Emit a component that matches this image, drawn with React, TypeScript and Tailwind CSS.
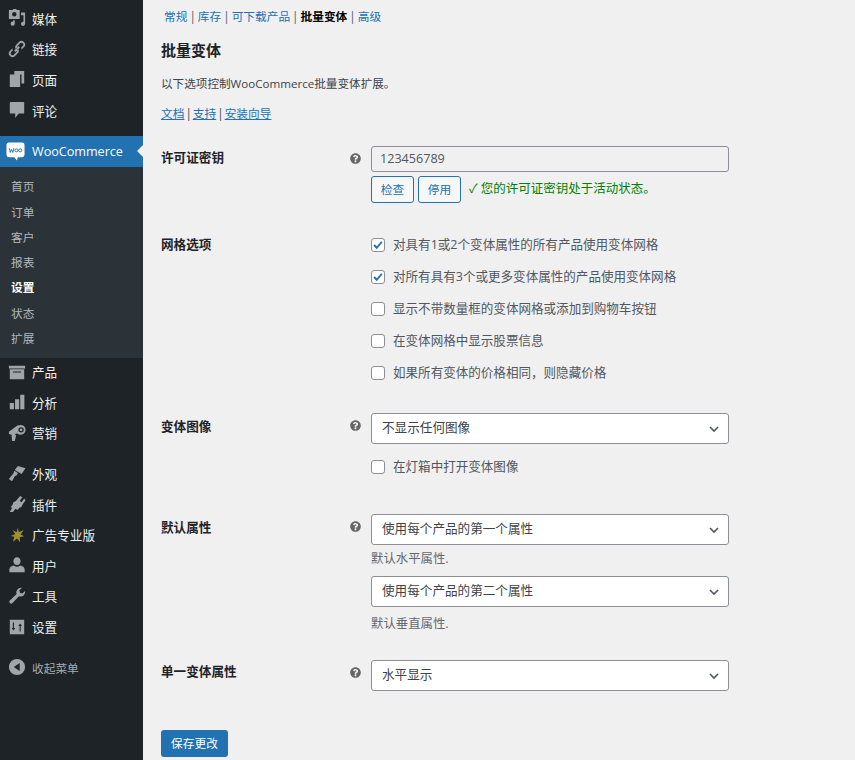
import type { ReactNode } from 'react';
import { FaQuestionCircle } from 'react-icons/fa';

const FONT = '"Open Sans", "Noto Sans CJK SC", sans-serif';

// ---------------------------------------------------------------------------
// Admin menu icons (dashicons look, drawn on a 20x20 box)
// ---------------------------------------------------------------------------

const ICONS: Record<string, ReactNode> = {
  media: (
    <path
      fillRule="evenodd"
      d="M1 1h4l1-1h3l1 1h3v10H1V1zm6 2.200a2.500 2.500 0 1 0 0 5 2.500 2.500 0 0 0 0-5zM14.500 4H19v12.500a2.300 2.300 0 1 1-1.800-2.200V7h-2.700V4zM7.500 12.500v3.800a2.300 2.300 0 1 1-1.800-2.200v-1.600h1.800z"
    />
  ),
  links: (
    <path
      fillRule="evenodd"
      d="M17.700 2.300a4 4 0 0 0-5.600 0L9.200 5.200a4 4 0 0 0-.5 5l1.600-1.600a2 2 0 0 1 .4-2l2.800-2.900a2 2 0 0 1 2.900 2.900l-1.700 1.700a6 6 0 0 1 .2 2.600l3-3a4 4 0 0 0-.2-5.600zM11.300 9.800l-1.600 1.600a2 2 0 0 1-.4 2l-2.800 2.900a2 2 0 0 1-2.900-2.900l1.700-1.700a6 6 0 0 1-.2-2.600l-3 3a4 4 0 0 0 5.800 5.600l2.900-2.900a4 4 0 0 0 .5-5zM6.800 11.800l5-5 1.400 1.400-5 5-1.400-1.400z"
    />
  ),
  pages: <path d="M7 1h11v14h-3V5H7V1zM2 5h11.500v14H2V5z" />,
  comments: <path d="M3 1h14a1 1 0 0 1 1 1v11a1 1 0 0 1-1 1h-5l-4 5v-5H3a1 1 0 0 1-1-1V2a1 1 0 0 1 1-1z" />,
  products: (
    <path
      fillRule="evenodd"
      d="M1 3h18v3H1V3zm1 4h16v11H2V7zm3.500 2.500v1h9v-1h-9z"
    />
  ),
  analytics: <path d="M2 11h4.600v7H2v-7zM7.800 7h4.600v11H7.800V7zM13.600 2h4.600v16h-4.600V2z" />,
  marketing: (
    <path
      fillRule="evenodd"
      d="M14 1a5.500 5.500 0 0 1 5.500 5.500c0 3-2.300 5.500-5.200 5.500-1.200 0-2.500-.5-4.300-1.500l-2.300.5L9 13l-1.500 6H4.500l-.5-7L1 11V8.500L8.500 3C10 1.800 12 1 14 1zm.5 2.500a3 3 0 1 0 0 6 3 3 0 0 0 0-6zm0 1.500a1.500 1.500 0 1 1 0 3 1.500 1.500 0 0 1 0-3z"
    />
  ),
  appearance: <path d="M11 1l8.500 2.500-4.500 6.500-7.500-4.500L11 1zM7 6.500l4 2.500-1 2-2.500 1.500L4.500 18 1 15.500 4.500 11 6 9.500 7 6.500z" />,
  plugins: (
    <path d="M13.500 1L16 2.500l-3 4 2 1.500 3-4 1.500 1.800-3.500 5-1 2.500-2.500 1-1.500 2L8 15.500 5.500 19H2l2.500-4.500L3 13l2-2 1-3 2.500-1L13.500 1z" />
  ),
  ads: <path d="M11 2l1 5 5.500-2.500-3.500 5 4 2-5 1 .5 5.500-3.500-4-4.500 3.500 1.500-5.500L3 11l5-2-3-4.500L9.500 7 11 2z" />,
  users: (
    <path d="M10 1.500a4 4 0 0 1 4 4.200c0 2-1.200 4.300-4 4.300S6 7.700 6 5.700a4 4 0 0 1 4-4.200zM6.500 10.500c1 1 2.200 1.500 3.500 1.500s2.500-.5 3.500-1.500c2.500.3 5 1.800 5 4.500v3H1.500v-3c0-2.700 2.500-4.200 5-4.500z" />
  ),
  tools: (
    <path d="M19 4.500a5 5 0 0 1-6.800 5.700L5 17.800a2 2 0 0 1-3-2.800l7.600-7.300A5 5 0 0 1 15.300 1L12.500 4l.8 2.500 2.500.7L19 4.500z" />
  ),
  settings: (
    <path
      fillRule="evenodd"
      d="M2 2h16v16H2V2zm3.400 3v6H4l2 3 2-3H6.600V5H5.400zm7.500 10V9h-1.400l2-3 2 3h-1.400v6h-1.200z"
    />
  ),
  collapse: (
    <path
      fillRule="evenodd"
      d="M10 1a9 9 0 1 1 0 18 9 9 0 0 1 0-18zm3 4.500L6.500 10l6.500 4.500v-9z"
    />
  ),
};

function MenuIcon({ name, className }: { name: string; className?: string }) {
  return (
    <svg viewBox="0 0 20 20" className={`mb-[4px] h-[18px] w-[18px] flex-none ${className ?? 'fill-[#a0a5aa]'}`}>
      {ICONS[name]}
    </svg>
  );
}

function WooLogo() {
  return (
    <svg viewBox="0 0 20 20" className="h-[19px] w-[19px] flex-none">
      <path d="M3 .500h14a2.500 2.500 0 0 1 2.500 2.500v10.500a2.500 2.500 0 0 1-2.500 2.500h-4.500l-1 3.500-2.700-3.500H3a2.500 2.500 0 0 1-2.500-2.500V3A2.500 2.500 0 0 1 3 .500z" fill="#ffffff" />
      <path d="M3.500 6.500l1 4.500 1.300-3.200L7.200 11l1-4.500" fill="none" stroke="#2271b1" strokeWidth="1" />
      <circle cx="11" cy="8.800" r="1.600" fill="none" stroke="#2271b1" strokeWidth="1" />
      <circle cx="15" cy="8.800" r="1.600" fill="none" stroke="#2271b1" strokeWidth="1" />
    </svg>
  );
}

// ---------------------------------------------------------------------------
// Sidebar
// ---------------------------------------------------------------------------

function MenuItem({ icon, label }: { icon: string; label: string }) {
  return (
    <div className="flex h-[30.6px] items-center pl-[8px]">
      <MenuIcon name={icon} className={icon === 'ads' ? 'fill-[#a3902c]' : undefined} />
      <span className="ml-[6px] text-[12.6px] text-[#f0f0f1]">{label}</span>
    </div>
  );
}

function Sidebar() {
  const submenu = ['首页', '订单', '客户', '报表', '设置', '状态', '扩展'];
  return (
    <aside className="w-[143px] flex-none bg-[#1d2327] pt-[5px]">
      <MenuItem icon="media" label="媒体" />
      <MenuItem icon="links" label="链接" />
      <MenuItem icon="pages" label="页面" />
      <MenuItem icon="comments" label="评论" />

      <div className="relative mt-[9px] flex h-[31px] items-center bg-[#2271b1] pl-[6px]">
        <WooLogo />
        <span className="ml-[7px] pt-[2px] text-[12.6px] text-white">WooCommerce</span>
        <span className="absolute right-0 top-[9px] h-0 w-0 border-y-[6px] border-r-[6px] border-y-transparent border-r-[#f0f0f1]" />
      </div>

      <div className="bg-[#2c3338] pb-[7px] pt-[7px]">
        {submenu.map((item) => (
          <div
            key={item}
            className={`flex h-[25.3px] items-center pl-[11px] text-[11.7px] ${
              item === '设置' ? 'font-bold text-white' : 'text-[#b4b9be]'
            }`}
          >
            {item}
          </div>
        ))}
      </div>

      <MenuItem icon="products" label="产品" />
      <MenuItem icon="analytics" label="分析" />
      <MenuItem icon="marketing" label="营销" />
      <div className="h-[10px]" />
      <MenuItem icon="appearance" label="外观" />
      <MenuItem icon="plugins" label="插件" />
      <MenuItem icon="ads" label="广告专业版" />
      <MenuItem icon="users" label="用户" />
      <MenuItem icon="tools" label="工具" />
      <MenuItem icon="settings" label="设置" />

      <div className="mt-[10px] flex h-[30px] items-center pl-[8px]">
        <MenuIcon name="collapse" />
        <span className="ml-[6px] text-[11.7px] text-[#a7aaad]">收起菜单</span>
      </div>
    </aside>
  );
}

// ---------------------------------------------------------------------------
// Form parts
// ---------------------------------------------------------------------------

function Check({ label, checked }: { label: string; checked?: boolean }) {
  return (
    <label className="flex h-[32px] items-center">
      <span className="flex h-[14px] w-[14px] items-center justify-center rounded-[3px] border border-[#8c8f94] bg-white">
        {checked && (
          <svg viewBox="0 0 14 14" className="h-[12px] w-[12px]">
            <path d="M2.500 7l3 3.200 6-7" fill="none" stroke="#2271b1" strokeWidth="2.200" />
          </svg>
        )}
      </span>
      <span className="ml-[8px] text-[12.55px] text-[#50575e]">{label}</span>
    </label>
  );
}

function Select({ value }: { value: string }) {
  return (
    <div className="flex h-[31px] w-[358px] items-center justify-between rounded-[3px] border border-[#8c8f94] bg-white pl-[10px] pr-[8px] text-[12.6px] text-[#3c434a]">
      <span>{value}</span>
      <svg viewBox="0 0 12 12" className="h-[12px] w-[12px]">
        <path d="M2 4l4 4 4-4" fill="none" stroke="#50575e" strokeWidth="1.600" />
      </svg>
    </div>
  );
}

function Row({
  label,
  help,
  className,
  labelClassName,
  children,
}: {
  label: string;
  help?: boolean;
  className?: string;
  labelClassName?: string;
  children: ReactNode;
}) {
  return (
    <div className={`flex items-start ${className ?? ''}`}>
      <div className={`w-[188px] flex-none text-[12.6px] font-bold text-[#1d2327] ${labelClassName ?? 'pt-[3px]'}`}>{label}</div>
      <div className="w-[22px] flex-none pl-[1px] pt-[7px]">
        {help && <FaQuestionCircle className="h-[11px] w-[11px] text-[#666666]" />}
      </div>
      <div className="w-[358px] flex-none">{children}</div>
    </div>
  );
}

function OutlineButton({ children }: { children: ReactNode }) {
  return (
    <span className="flex h-[27px] w-[43px] items-center justify-center rounded-[3px] border border-[#2271b1] bg-[#f6f7f7] text-[11.7px] text-[#2271b1]">
      {children}
    </span>
  );
}

// ---------------------------------------------------------------------------
// Page
// ---------------------------------------------------------------------------

export default function App() {
  return (
    <div className="flex h-[760px] overflow-hidden bg-[#f0f0f1]" style={{ fontFamily: FONT }}>
      <Sidebar />
      <main className="flex-1 pl-[18px]">
        <div className="flex h-[33px] items-center pl-[3px] text-[11.7px] text-[#50575e]">
          <a className="text-[#2271b1]">常规</a>
          <span className="mx-[2px]">|</span>
          <a className="text-[#2271b1]">库存</a>
          <span className="mx-[2px]">|</span>
          <a className="text-[#2271b1]">可下载产品</a>
          <span className="mx-[2px]">|</span>
          <span className="font-bold text-black">批量变体</span>
          <span className="mx-[2px]">|</span>
          <a className="text-[#2271b1]">高级</a>
        </div>

        <h2 className="mt-[7px] text-[15px] font-bold leading-[20px] text-[#1d2327]">批量变体</h2>
        <p className="mt-[15px] text-[11.6px] leading-[18px] text-[#3c434a]">以下选项控制WooCommerce批量变体扩展。</p>
        <p className="mt-[11px] flex text-[11.7px] leading-[18px] text-[#3c434a]">
          <a className="text-[#2271b1] underline">文档</a>
          <span className="mx-[1px]">|</span>
          <a className="text-[#2271b1] underline">支持</a>
          <span className="mx-[1px]">|</span>
          <a className="text-[#2271b1] underline">安装向导</a>
        </p>

        <Row label="许可证密钥" help className="mt-[24px]">
          <div className="flex h-[26px] items-center rounded-[3px] border border-[#8c8f94] bg-[#f0f0f1] pl-[8px] text-[12.6px] text-[#50575e]">
            123456789
          </div>
          <div className="mt-[4px] flex items-center gap-[4px]">
            <OutlineButton>检查</OutlineButton>
            <OutlineButton>停用</OutlineButton>
            <span className="ml-[4px] text-[12.5px] text-[#008000]">✓ 您的许可证密钥处于活动状态。</span>
          </div>
        </Row>

        <Row label="网格选项" labelClassName="pt-[7px]" className="mt-[26px]">
          <Check checked label="对具有1或2个变体属性的所有产品使用变体网格" />
          <Check checked label="对所有具有3个或更多变体属性的产品使用变体网格" />
          <Check label="显示不带数量框的变体网格或添加到购物车按钮" />
          <Check label="在变体网格中显示股票信息" />
          <Check label="如果所有变体的价格相同，则隐藏价格" />
        </Row>

        <Row label="变体图像" help labelClassName="pt-[5px]" className="mt-[24px]">
          <Select value="不显示任何图像" />
          <div className="mt-[7px]">
            <Check label="在灯箱中打开变体图像" />
          </div>
        </Row>

        <Row label="默认属性" help labelClassName="pt-[5px]" className="mt-[31px]">
          <Select value="使用每个产品的第一个属性" />
          <p className="mt-[5px] text-[12.4px] leading-[18px] text-[#646970]">默认水平属性.</p>
          <div className="mt-[8px]">
            <Select value="使用每个产品的第二个属性" />
          </div>
          <p className="mt-[8px] text-[12.4px] leading-[18px] text-[#646970]">默认垂直属性.</p>
        </Row>

        <Row label="单一变体属性" help className="mt-[27px]">
          <Select value="水平显示" />
        </Row>

        <button className="mt-[39px] flex h-[27px] w-[67px] items-center justify-center rounded-[3px] bg-[#2271b1] text-[11.7px] text-white">
          保存更改
        </button>
      </main>
    </div>
  );
}
